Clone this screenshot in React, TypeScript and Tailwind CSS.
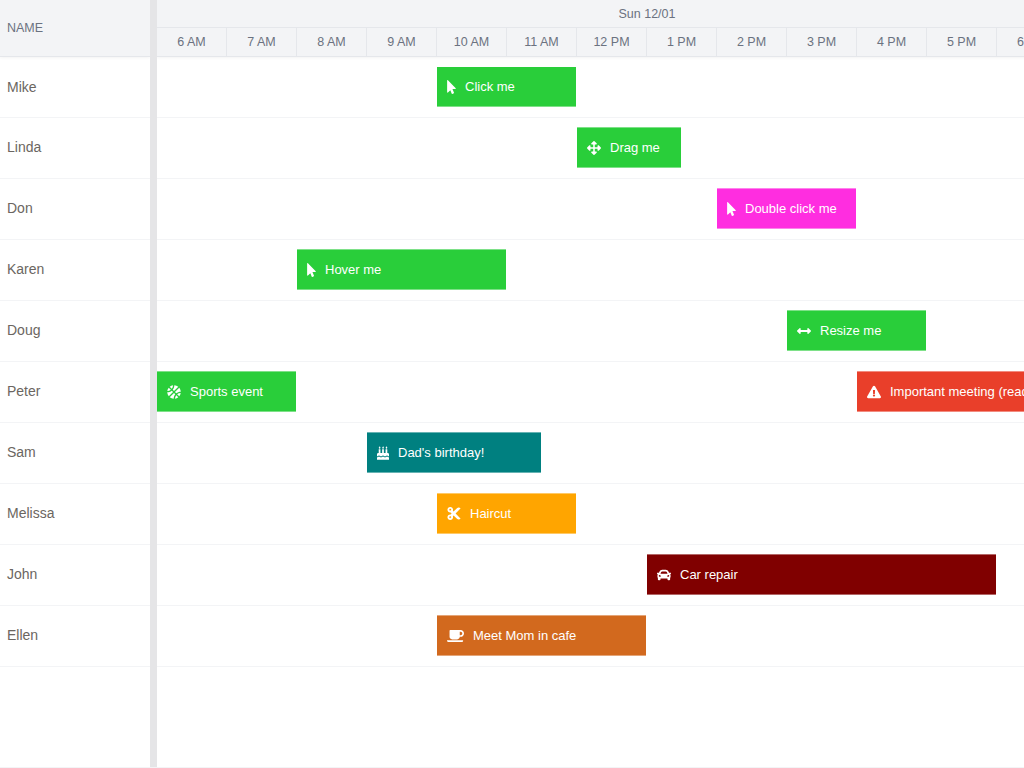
import React from 'react';
import {
  FaArrowsAlt,
  FaArrowsAltH,
  FaBasketballBall,
  FaBirthdayCake,
  FaCar,
  FaCoffee,
  FaCut,
  FaExclamationTriangle,
  FaMousePointer,
} from 'react-icons/fa';

const hours = ['6 AM', '7 AM', '8 AM', '9 AM', '10 AM', '11 AM', '12 PM', '1 PM', '2 PM', '3 PM', '4 PM', '5 PM', '6 PM', '7 PM'];

// each column of the row grid is half an hour
const rows = [
  { name: 'Mike', events: [{ text: 'Click me', icon: FaMousePointer, iconCls: 'h-[14px] w-[9px]', cls: 'col-start-9 col-span-4 bg-[#29ce3a]' }] },
  { name: 'Linda', events: [{ text: 'Drag me', icon: FaArrowsAlt, iconCls: 'h-[14px] w-[14px]', cls: 'col-start-13 col-span-3 bg-[#29ce3a]' }] },
  { name: 'Don', events: [{ text: 'Double click me', icon: FaMousePointer, iconCls: 'h-[14px] w-[9px]', cls: 'col-start-17 col-span-4 bg-[#ff2de0]' }] },
  { name: 'Karen', events: [{ text: 'Hover me', icon: FaMousePointer, iconCls: 'h-[14px] w-[9px]', cls: 'col-start-5 col-span-6 bg-[#29ce3a]' }] },
  { name: 'Doug', events: [{ text: 'Resize me', icon: FaArrowsAltH, iconCls: 'h-[14px] w-[14px]', cls: 'col-start-19 col-span-4 bg-[#29ce3a]' }] },
  {
    name: 'Peter',
    events: [
      { text: 'Sports event', icon: FaBasketballBall, iconCls: 'h-[14px] w-[14px]', cls: 'col-start-1 col-span-4 bg-[#29ce3a]' },
      { text: 'Important meeting (read me)', icon: FaExclamationTriangle, iconCls: 'h-[14px] w-[14px]', cls: 'col-start-21 col-span-8 bg-[#e93f2a]' },
    ],
  },
  { name: 'Sam', events: [{ text: "Dad's birthday!", icon: FaBirthdayCake, iconCls: 'h-[14px] w-[12px]', cls: 'col-start-7 col-span-5 bg-[#008080]' }] },
  { name: 'Melissa', events: [{ text: 'Haircut', icon: FaCut, iconCls: 'h-[15px] w-[14px]', cls: 'col-start-9 col-span-4 bg-[#ffa500]' }] },
  { name: 'John', events: [{ text: 'Car repair', icon: FaCar, iconCls: 'h-[14px] w-[14px]', cls: 'col-start-15 col-span-10 bg-[#800000]' }] },
  { name: 'Ellen', events: [{ text: 'Meet Mom in cafe', icon: FaCoffee, iconCls: 'h-[14px] w-[17px]', cls: 'col-start-9 col-span-6 bg-[#d2691e]' }] },
];

const App: React.FC = () => {
  return (
    <div className="flex h-screen overflow-hidden border-b border-[#f3f4f6] bg-white font-['Liberation_Sans',Arial,sans-serif]">
      <div className="w-[150px] shrink-0">
        <div className="relative z-10 flex h-[57px] items-center border-b border-[#e5e7eb] bg-[#f3f4f6] px-[7px] text-[12.5px] text-[#6b7280] shadow-[0_1px_3px_rgba(0,0,0,0.05)]">
          NAME
        </div>
        {rows.map((row, i) => (
          <div
            key={row.name}
            className={`flex h-[61px] items-center border-b border-[#f3f4f6] px-[7px] text-[14px] text-[#6b6661] ${i > 0 ? 'pb-[2px]' : ''}`}
          >
            {row.name}
          </div>
        ))}
      </div>

      <div className="relative z-20 w-[7px] shrink-0 bg-[#e5e5e7]" />

      <div className="w-[980px] shrink-0">
        <div className="relative z-10 h-[57px] border-b border-[#e5e7eb] bg-[#f3f4f6] text-[12.5px] text-[#6b7280] shadow-[0_1px_3px_rgba(0,0,0,0.05)]">
          <div className="flex h-[28px] items-center justify-center border-b border-[#e5e7eb] pt-px">Sun 12/01</div>
          <div className="flex h-[28px]">
            {hours.map(h => (
              <div key={h} className="flex w-[70px] items-center justify-center border-r border-[#e5e7eb]">
                {h}
              </div>
            ))}
          </div>
        </div>
        {rows.map((row, i) => (
          <div
            key={row.name}
            className={`grid h-[61px] grid-cols-[repeat(28,35px)] items-center border-b border-[#f3f4f6] ${i > 0 ? 'pb-px' : ''}`}
          >
            {row.events.map(ev => {
              const Icon = ev.icon;
              return (
                <div
                  key={ev.text}
                  className={`row-start-1 mr-px flex items-center overflow-hidden whitespace-nowrap border-white/40 px-[10px] text-[13px] text-white ${i > 0 ? 'h-[41px] border-y' : 'h-10 border-b'} ${ev.cls}`}
                >
                  <Icon className={`mr-[9px] shrink-0 ${ev.iconCls}`} />
                  {ev.text}
                </div>
              );
            })}
          </div>
        ))}
      </div>
    </div>
  );
};

export default App;
